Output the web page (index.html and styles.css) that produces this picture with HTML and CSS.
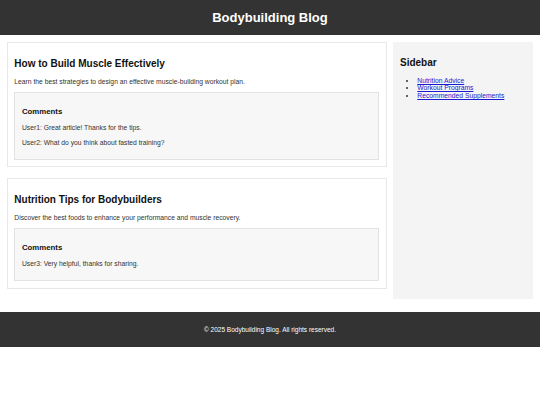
FILE: index.html
```html
<!DOCTYPE html>
<html lang="en">
<head>
    <meta charset="UTF-8">
    <meta name="viewport" content="width=device-width, initial-scale=1.0">
    <title>Bodybuilding Blog</title>
    <link rel="stylesheet" href="styles.css">
</head>
<body>

<header class="site-header">
    <h1>Bodybuilding Blog</h1>
</header>

<div class="container">
    <!-- Daftar artikel -->
    <main class="posts">
        <article class="post">
            <h2>How to Build Muscle Effectively</h2>
            <p>Learn the best strategies to design an effective muscle-building workout plan.</p>
            <div class="comments">
                <h3>Comments</h3>
                <p>User1: Great article! Thanks for the tips.</p>
                <p>User2: What do you think about fasted training?</p>
            </div>
        </article>

        <article class="post">
            <h2>Nutrition Tips for Bodybuilders</h2>
            <p>Discover the best foods to enhance your performance and muscle recovery.</p>
            <div class="comments">
                <h3>Comments</h3>
                <p>User3: Very helpful, thanks for sharing.</p>
            </div>
        </article>
    </main>

    <!-- Sidebar -->
    <aside class="sidebar">
        <h2>Sidebar</h2>
        <ul>
            <li><a href="#">Nutrition Advice</a></li>
            <li><a href="#">Workout Programs</a></li>
            <li><a href="#">Recommended Supplements</a></li>
        </ul>
    </aside>
</div>

<footer class="site-footer">
    <p>&copy; 2025 Bodybuilding Blog. All rights reserved.</p>
</footer>

</body>
</html>
```

FILE: styles.css
```css
body {
    font-family: 'Liberation Sans', Arial, sans-serif;
    font-size: 6.75px;
    line-height: 7.7px;
    color: #333;
    margin: 0;
    padding: 0;
    background: #fff;
}
.site-header {
    background: #333;
    color: #fff;
    text-align: center;
    padding: 10px 0;
}
.site-header h1 {
    font-size: 13px;
    line-height: 15px;
    margin: 0;
}
.container {
    display: flex;
    gap: 6.67px;
    padding: 6.67px;
}
.posts {
    flex: 1;
}
.post {
    background: #fff;
    border: 1px solid #e8e8e8;
    padding: 6.67px;
    margin-bottom: 10.3px;
}
h2 {
    font-size: 10px;
    line-height: 11.5px;
    color: #111;
    margin: 8.5px 0 8.3px;
}
p {
    margin: 6.67px 0;
}
.comments {
    background: #f7f7f7;
    border: 1px solid #e3e3e3;
    padding: 0 6.67px;
}
.comments h3 {
    font-size: 7.8px;
    line-height: 9px;
    color: #111;
    margin: 14.4px 0 7.8px;
}
.comments p:last-child {
    margin-bottom: 12.4px;
}
.sidebar {
    width: 140px;
    background: #f4f4f4;
    padding: 6.67px;
    box-sizing: border-box;
}
.sidebar ul {
    margin: 6.67px 0;
    padding-left: 17.3px;
}
.sidebar a {
    color: #1a1ad0;
}
.site-footer {
    background: #333;
    color: #fff;
    text-align: center;
    padding: 13.5px 0;
    margin-top: 6.67px;
}
.site-footer p {
    margin: 0;
    font-size: 6.5px;
    line-height: 7.67px;
}
```
